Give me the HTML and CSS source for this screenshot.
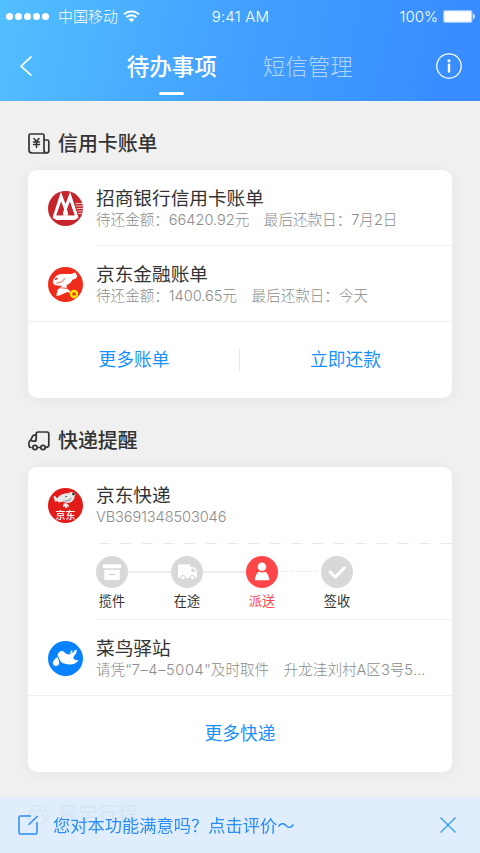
FILE: index.html
```html
<!DOCTYPE html>
<html lang="zh-CN">
<head>
<meta charset="utf-8">
<title>待办事项</title>
<link rel="stylesheet" href="styles.css">
</head>
<body>
<header class="header">
  <div class="status">
    <div class="carrier">
      <span class="signal"><i></i><i></i><i></i><i></i><i></i></span>
      <span class="carrier-name">中国移动</span>
      <svg class="wifi" width="17" height="13" viewBox="0 0 17 13" fill="none" stroke="#fff" stroke-width="1.9"><path d="M.9 4.4C5.2.3 11.8.3 16.1 4.4M3.6 7.2c2.8-2.6 7-2.6 9.8 0"/><path d="M5.5 9.3c1.7-1.5 4.3-1.5 6 0l-3 3z" fill="#fff" stroke="none"/></svg>
    </div>
    <div class="clock">9:41 AM</div>
    <div class="power"><span>100%</span><svg width="32" height="13" viewBox="0 0 32 13"><rect width="29.500" height="13" rx="2.200" fill="#fff" opacity=".5"/><rect x="1.300" y="1.300" width="27" height="10.400" rx="1" fill="#fff"/><path d="M30 4h.6c.8 0 1.200 1.100 1.200 2.500S31.400 9 30.600 9H30z" fill="#fff" opacity=".8"/></svg></div>
  </div>
  <nav class="nav">
    <svg class="back" width="14" height="20" viewBox="0 0 14 20" fill="none" stroke="#fff" stroke-width="1.700" stroke-linecap="round"><path d="M12 1 2 10.200l10 9"/></svg>
    <div class="tabs">
      <span class="tab tab-active">待办事项</span>
      <span class="tab">短信管理</span>
    </div>
    <svg class="info" width="26" height="26" viewBox="0 0 26 26" fill="none" stroke="#fff"><circle cx="13" cy="13" r="12.200" stroke-width="1.300"/><circle cx="13" cy="7.800" r="1.600" fill="#fff" stroke="none"/><path d="M13 11.800v6.800" stroke-width="2.400" stroke-linecap="round"/></svg>
  </nav>
</header>

<main class="main">
  <h2 class="heading">
    <svg width="22" height="22" viewBox="0 0 22 22" fill="none" stroke="#333" stroke-width="1.700" stroke-linejoin="round" stroke-linecap="round"><path d="M16 17V2.500Q16 1 14.500 1h-12Q1 1 1 2.500V17q0 3 3 3h14.500q2.300 0 2.300-2.300V8.500Q20.800 7 19.300 7H16M16 17q0 3 2.500 3"/><path d="m6 5.500 2.500 3 2.500-3M5.500 9h6M5.500 11.600h6M8.500 9v5.500" stroke-width="1.500"/></svg>
    <span>信用卡账单</span>
  </h2>
  <section class="card">
    <div class="row">
      <svg class="logo" viewBox="0 0 35 35"><circle cx="17.500" cy="17.500" r="17.500" fill="#c7252c"/><path d="M6.500 25.500 13 5.500l4.500 12L22 5.500l6.500 20" fill="none" stroke="#fff" stroke-width="3.200"/><path d="m17.500 14.500 3.500 10h-7z" fill="#fff"/><path d="M5.500 24.300h24l1 2.500-4 2.200h-18l-4-2.200z" fill="#fff"/><path d="m12.200 14.500 3.300 9.800H8.200zM22.800 14.500l4 9.800h-7.300z" fill="#c7252c"/><path d="M27.500 12.500H34M28 15h6.700M28.800 17.500H35M29.500 20H35M30.200 22.500H34" stroke="#fff" stroke-width=".9" opacity=".8"/></svg>
      <div class="body">
        <h3>招商银行信用卡账单</h3>
        <p><span>待还金额：66420.92元</span><span>最后还款日：7月2日</span></p>
      </div>
    </div>
    <div class="row row-full">
      <svg class="logo" viewBox="0 0 35 35"><circle cx="17.500" cy="17.500" r="17.500" fill="#f02d1d"/><path d="M4.800 15.500C5.500 11 8.500 7.600 13 7.100c5-.6 8 .5 11.200-.4 1.800-1.300 3.800-1.500 3.900.3l1 1.800c.3 2-2.100 3.800-4.600 3.600-1.200 3.100-3.300 4.700-5.700 5.400l-.2 3.400 3 2.200 1 2.700-3.300-1.100-8 3.600-3 .3 1.200-6 4.600-4.200c-4.300.1-8 .2-9.300-3.200z" fill="#fff"/><path d="M8.500 16c4-.1 7.200-2 8.200-4.700M12.500 20.800l6.500.6" fill="none" stroke="#f02d1d" stroke-width=".8"/><ellipse cx="8.300" cy="11.800" rx="1.600" ry=".9" transform="rotate(-40 8.300 11.800)" fill="#f02d1d"/><circle cx="26" cy="27" r="3" fill="none" stroke="#ffe800" stroke-width="2.400"/></svg>
      <div class="body">
        <h3>京东金融账单</h3>
        <p><span>待还金额：1400.65元</span><span>最后还款日：今天</span></p>
      </div>
    </div>
    <div class="actions">
      <a>更多账单</a><a>立即还款</a>
    </div>
  </section>

  <h2 class="heading heading-express">
    <svg width="22" height="22" viewBox="0 0 22 22" fill="none" stroke="#333" stroke-width="1.700" stroke-linejoin="round" stroke-linecap="round"><path d="M8.200 9.500V4Q8.200 2 10.200 2h8.600q2 0 2 2v11q0 2.300-2.600 2.300"/><path d="M8.200 5.200H6.500Q5 5.200 4.300 6.700L2.900 9.800 1.500 11.200Q1 11.800 1 13v2.300q0 2 2 2.200M4 11.200h2.500q1.700 0 1.700-1.700M10.700 17.500h1.800"/><circle cx="7" cy="17.500" r="2.200"/><circle cx="15" cy="17.500" r="2.200"/></svg>
    <span>快递提醒</span>
  </h2>
  <section class="card">
    <div class="row row-dashed">
      <svg class="logo" viewBox="0 0 35 35"><circle cx="17.500" cy="17.500" r="17.500" fill="#e41b1b"/><path d="M5.500 8.500q1.400-1.300 2.600.5l1 1.400C11.500 6.500 16.500 5 20.500 5.200c1.500-1.300 3.800-1.500 5.400-.5 1.900.3 2.200 2.600.6 3.300.7 3.500-3 7-7 6.900q-2.500 0-4.300-1.400l-4.400 1-1.500-1.400-2.300.6z" fill="#e9e9e9"/><path d="M15 12.500q5.500 0 9-3.500-1.200 4.600-5 4.700-2.700 0-4-1.200z" fill="#aaa"/><circle cx="25.500" cy="6" r="1.300" fill="#222"/><circle cx="18" cy="8.500" r=".7" fill="#333"/><path d="m15.500 15.500 3-.3 2.500 2.300-1 2-1-1.500v2h-2v-2l-2 1.600z" fill="#eee"/><text x="17.500" y="30.500" text-anchor="middle" class="logo-text">京东</text></svg>
      <div class="body">
        <h3>京东快递</h3>
        <p class="code">VB3691348503046</p>
      </div>
    </div>
    <div class="steps">
      <div class="step"><svg viewBox="0 0 32 32"><circle cx="16" cy="16" r="16" fill="#d8d8d8"/><rect x="7" y="8.300" width="18" height="4" rx="1" fill="#fff"/><path d="M8.200 13.700h15.600v9.100q0 1.300-1.300 1.300H9.500q-1.300 0-1.300-1.300z" fill="#fff"/><path d="M13.700 18.600h4.800" stroke="#d8d8d8" stroke-width="1.500" stroke-linecap="round"/></svg><span>揽件</span></div>
      <i class="link"></i>
      <div class="step"><svg viewBox="0 0 32 32"><circle cx="16" cy="16" r="16" fill="#d8d8d8"/><path d="M8 8.500h10.500Q19.500 8.500 19.500 9.500V11h2.500q3.700 1 4 5v5q0 1-1 1H8q-1 0-1-1V9.500q0-1 1-1z" fill="#fff"/><path d="M20.500 12.500h1.300q2.300.7 2.700 3.500h-4z" fill="#d8d8d8"/><circle cx="12" cy="21.700" r="2.200" fill="#fff" stroke="#d8d8d8" stroke-width="1.200"/><circle cx="21.500" cy="21.700" r="2.200" fill="#fff" stroke="#d8d8d8" stroke-width="1.200"/></svg><span>在途</span></div>
      <i class="link"></i>
      <div class="step step-active"><svg viewBox="0 0 32 32"><circle cx="16" cy="16" r="16" fill="#ff4648"/><circle cx="16" cy="10.800" r="4.300" fill="#fff"/><path d="M12.200 15.700q3.800 1.500 7.600 0 2.500 2.500 3.500 7.300.2 1.300-1 1.300H9.900q-1.400 0-1.100-1.300 1-4.800 3.400-7.300z" fill="#fff"/></svg><span>派送</span></div>
      <i class="link link-dotted"></i>
      <div class="step"><svg viewBox="0 0 32 32"><circle cx="16" cy="16" r="16" fill="#d8d8d8"/><path d="m9 15.800 5.300 5.300 9.200-9.300" fill="none" stroke="#fff" stroke-width="3" stroke-linecap="round" stroke-linejoin="round"/></svg><span>签收</span></div>
    </div>
    <div class="row row-full row-station">
      <svg class="logo" viewBox="0 0 35 35"><circle cx="17.500" cy="17.500" r="17.500" fill="#0882ff"/><path d="M9.500 14.500Q10.500 10 13.800 10q2.200 0 3.600 2.300 1.800 1.600 4 .9 4.300-1.200 7-4.700 1 1-.1 3.200-.8 2-2.300 3.300-1 1.600-.4 2.800 1.300 1.600 4.900 1.500-2.600 3.700-6.700 4-5 .7-9.300-1.300-2.800-1.700-3.400-4.700z" fill="#fff"/><path d="M20.500 13.500q2-1 2.700-4l1.200-.2q-.4 2-1.400 3.300 2-1.300 3-3.500l1.200-.2" fill="#fff"/><path d="M9.400 15.500q-2.700 1.700-4.700 5.200c-1.300 5 5.800 6.300 6.800 1.800q.5-3-2.100-7z" fill="#fff" stroke="#0882ff" stroke-width=".7"/></svg>
      <div class="body">
        <h3>菜鸟驿站</h3>
        <p><span>请凭<span class="pickup">“7–4–5004”</span>及时取件</span><span>升龙洼刘村A区3号5<span class="more">…</span></span></p>
      </div>
    </div>
    <div class="actions actions-single"><a>更多快递</a></div>
  </section>

  <h2 class="heading heading-trip">
    <svg width="22" height="22" viewBox="0 0 22 22" fill="none" stroke="#333" stroke-width="1.500" stroke-linejoin="round"><path d="M4 7V3.500Q4 2 5.500 2h10Q17 2 17 3.500V7M4 16H2.500Q1 16 1 14.500V9q0-2 2-2h15q2 0 2 2v5.500q0 1.500-1.500 1.500H17M5 11h3M13 11h3M5 14v4.500Q5 20 6.500 20h8q1.500 0 1.500-1.500V14"/></svg>
    <span>预定行程</span>
  </h2>
</main>

<footer class="feedback">
  <svg width="22" height="20" viewBox="0 0 22 20" fill="none" stroke="#2b8df8" stroke-width="1.500"><path d="M13 1H2.500Q1 1 1 2.500v15Q1 19 2.500 19h15q1.500 0 1.500-1.500V7M10.500 9.800 19.800 1"/></svg>
  <span class="feedback-text">您对本功能满意吗？点击评价～</span>
  <svg width="16" height="16" viewBox="0 0 16 16" fill="none" stroke="#2b9bf8" stroke-width="1.200"><path d="m.5.500 15 15M15.500.500l-15 15"/></svg>
</footer>
</body>
</html>
```

FILE: styles.css
```css
* { box-sizing: border-box; }

body {
  margin: 0;
  height: 853px;
  overflow: hidden;
  background: #f0f0f0;
  color: #333;
  font-family: Inter, "Noto Sans CJK SC", sans-serif;
}

h2, h3, p { margin: 0; font-weight: 400; }

.header {
  height: 100.500px;
  color: #fff;
  background: linear-gradient(102deg, #52bfff 0%, #42a0ff 50%, #378aff 100%);
}

.status {
  display: grid;
  grid-template-columns: 1fr auto 1fr;
  align-items: center;
  height: 32px;
  padding: 0 5px 0 6px;
  font-size: 15px;
  font-weight: 300;
}

.carrier, .power { display: flex; align-items: center; }
.carrier-name { padding-bottom: 2px; }
.signal { display: flex; gap: 2px; margin-right: 9px; }
.signal i { width: 7px; height: 7px; border-radius: 50%; background: #fff; }
.wifi { margin-left: 5px; }
.clock { font-size: 15px; letter-spacing: .2px; }
.power { justify-content: flex-end; gap: 5px; }

.nav {
  display: flex;
  align-items: center;
  justify-content: space-between;
  height: 68px;
  padding: 0 18.500px 0 19px;
}

.tabs { display: flex; gap: 46px; align-self: stretch; margin-left: 11px; }

.tab {
  display: flex;
  flex-direction: column;
  align-items: center;
  padding-top: 18px;
  font-size: 22.500px;
  line-height: 33px;
  font-weight: 300;
  color: rgba(255, 255, 255, .6);
}

.tab-active { font-weight: 500; color: #fff; }

.tab-active::after {
  content: "";
  width: 25px;
  height: 3px;
  margin-top: 9px;
  border-radius: 2px;
  background: #fff;
}

.main { padding: 0 28px; }

.heading {
  display: flex;
  align-items: center;
  gap: 8px;
  height: 69.500px;
  padding-top: 17px;
  font-size: 19.900px;
  line-height: 28px;
  font-weight: 500;
}

.heading-express { height: 69px; }
.heading-trip { height: 69px; padding-top: 16px; }

.card {
  height: 228px;
  border-radius: 9px;
  background: #fff;
  box-shadow: 0 2px 16px rgba(0, 0, 0, .05);
  overflow: hidden;
}

.heading-express + .card { height: 305px; }

.row {
  display: flex;
  height: 76px;
  padding-left: 20px;
}

.row-full { border-bottom: 1.500px solid #f0f0f0; }

.logo { width: 35px; height: 35px; margin: 21px 13px 0 0; flex: none; }
.logo-text { font-size: 10px; font-weight: 500; fill: #fff; }

.body { flex: 1; padding-top: 17px; border-bottom: 1.500px solid #f0f0f0; }
.row-full .body { border-bottom: 0; }
.body h3 { font-size: 18.670px; line-height: 24px; }

.body p {
  display: flex;
  gap: 14.600px;
  font-size: 14.600px;
  line-height: 19px;
  letter-spacing: -.03px;
  font-weight: 300;
  color: #8c8c8c;
  white-space: nowrap;
}

.body .code { letter-spacing: -.1px; }
.pickup { letter-spacing: .6px; }
.more { letter-spacing: 1px; }

.row-dashed { height: 78px; }

.row-dashed .body {
  border-bottom: 0;
  background: repeating-linear-gradient(90deg, transparent 0 3px, #e9e9e9 3px 14px, transparent 14px 21.350px) 0 76px / 100% 1px no-repeat;
}

.steps {
  display: flex;
  height: 75px;
  margin-left: 68px;
  padding-top: 11px;
  border-bottom: 1.500px solid #f0f0f0;
}

.step {
  display: flex;
  flex-direction: column;
  align-items: center;
  width: 32px;
  font-size: 13.200px;
  line-height: 20px;
}

.step svg { width: 32px; height: 32px; margin-bottom: 3px; }
.step-active { color: #ff4648; }
.link { width: 43px; height: 1.500px; margin-top: 15px; background: #ececec; }

.link-dotted {
  height: 1px;
  margin: 15px 3px 0;
  width: 37px;
  background: repeating-linear-gradient(90deg, #d8d8d8 0 1px, transparent 1px 3px);
}

.actions {
  display: grid;
  grid-template-columns: 1fr 1fr;
  height: 76px;
  align-items: center;
  text-align: center;
  font-size: 17.700px;
  line-height: 22px;
  color: #1890ff;
}

.actions a + a { position: relative; left: -1px; border-left: 1px solid #e8e8e8; }
.actions-single { grid-template-columns: 1fr; }

.feedback {
  position: fixed;
  inset: auto 0 0;
  display: flex;
  align-items: center;
  height: 56px;
  padding: 0 24px 0 18px;
  background: rgba(223, 236, 253, .96);
  color: #2b8df8;
  font-size: 17.250px;
}

.feedback-text { flex: 1; margin-left: 13px; padding-bottom: 2px; }
```
